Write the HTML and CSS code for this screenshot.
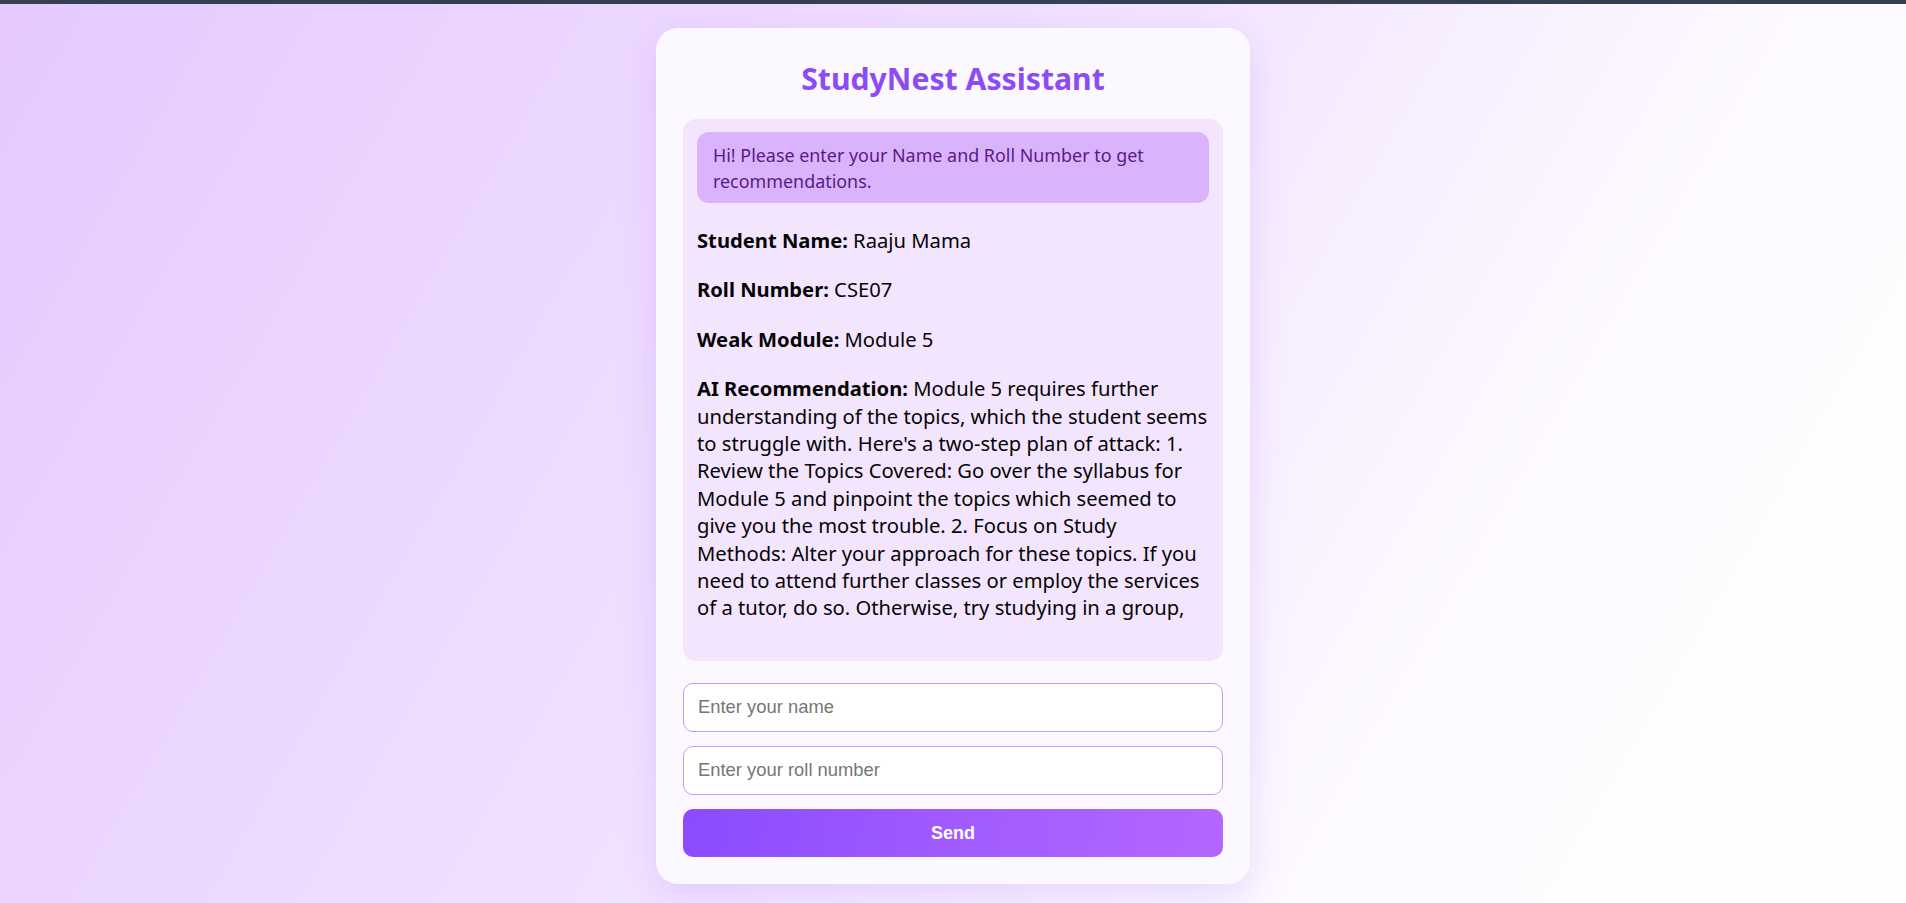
FILE: index.html
```html
<!DOCTYPE html>
<html lang="en">
<head>
<meta charset="utf-8">
<title>StudyNest Assistant</title>
<link rel="stylesheet" href="styles.css">
</head>
<body>
<div class="topbar"></div>
<main class="page">
  <section class="card">
    <h1 class="title">StudyNest Assistant</h1>
    <div class="chat">
      <div class="bubble">Hi! Please enter your Name and Roll Number to get recommendations.</div>
      <p class="line"><strong>Student Name:</strong> Raaju Mama</p>
      <p class="line"><strong>Roll Number:</strong> CSE07</p>
      <p class="line"><strong>Weak Module:</strong> Module 5</p>
      <p class="line"><strong>AI Recommendation:</strong> Module 5 requires further understanding of the topics, which the student seems to struggle with. Here's a two-step plan of attack: 1. Review the Topics Covered: Go over the syllabus for Module 5 and pinpoint the topics which seemed to give you the most trouble. 2. Focus on Study Methods: Alter your approach for these topics. If you need to attend further classes or employ the services of a tutor, do so. Otherwise, try studying in a group,</p>
    </div>
    <input class="field" type="text" placeholder="Enter your name">
    <input class="field" type="text" placeholder="Enter your roll number">
    <button class="send" type="button">Send</button>
  </section>
</main>
</body>
</html>
```

FILE: styles.css
```css
html, body {
  margin: 0;
  padding: 0;
}
body {
  min-height: 903px;
  background: linear-gradient(120deg, #e5c9ff 0%, #f1e1ff 45%, #fdfaff 75%, #ffffff 100%);
  font-family: "Noto Sans", "Open Sans", sans-serif;
  color: #050505;
}
.topbar {
  height: 4px;
  background: #363f52;
}
.page {
  display: flex;
  justify-content: center;
  padding-top: 24px;
}
.card {
  width: 594px;
  box-sizing: border-box;
  padding: 27px 27px 27px;
  background: #fcf8ff;
  border-radius: 22px;
  box-shadow: 0 12px 36px rgba(170, 110, 255, 0.22);
  display: flex;
  flex-direction: column;
}
.title {
  margin: 0 0 16px;
  height: 48px;
  line-height: 48px;
  text-align: center;
  font-size: 30.2px;
  font-weight: 700;
  color: #8c4cf5;
}
.chat {
  background: #f4e5ff;
  border-radius: 13px;
  padding: 13px 14px 17px;
  margin-bottom: 22px;
}
.bubble {
  background: #d9b3fc;
  color: #5a1a86;
  border-radius: 12px;
  padding: 11px 15px 9px 16px;
  font-size: 17.9px;
  line-height: 25.5px;
}
.line {
  margin: 22px 0;
  font-size: 20.2px;
  line-height: 27.4px;
}
.bubble + .line {
  margin-top: 24px;
}
.line strong {
  font-weight: 700;
}
.field {
  height: 49px;
  box-sizing: border-box;
  border: 1px solid #c49bff;
  border-radius: 10px;
  background: #ffffff;
  padding: 0 14px;
  font-family: "Liberation Sans", Arial, sans-serif;
  font-size: 18.4px;
  color: #222;
  margin: 0 0 14px;
  outline: none;
}
.field::placeholder {
  color: #767676;
}
.send {
  margin-top: 0.5px;
  height: 48px;
  border: none;
  border-radius: 10px;
  background: linear-gradient(100deg, #8a4bff 0%, #a35cff 55%, #b467ff 100%);
  color: #ffffff;
  font-family: "Liberation Sans", Arial, sans-serif;
  font-size: 18px;
  font-weight: 700;
  cursor: pointer;
}
```
